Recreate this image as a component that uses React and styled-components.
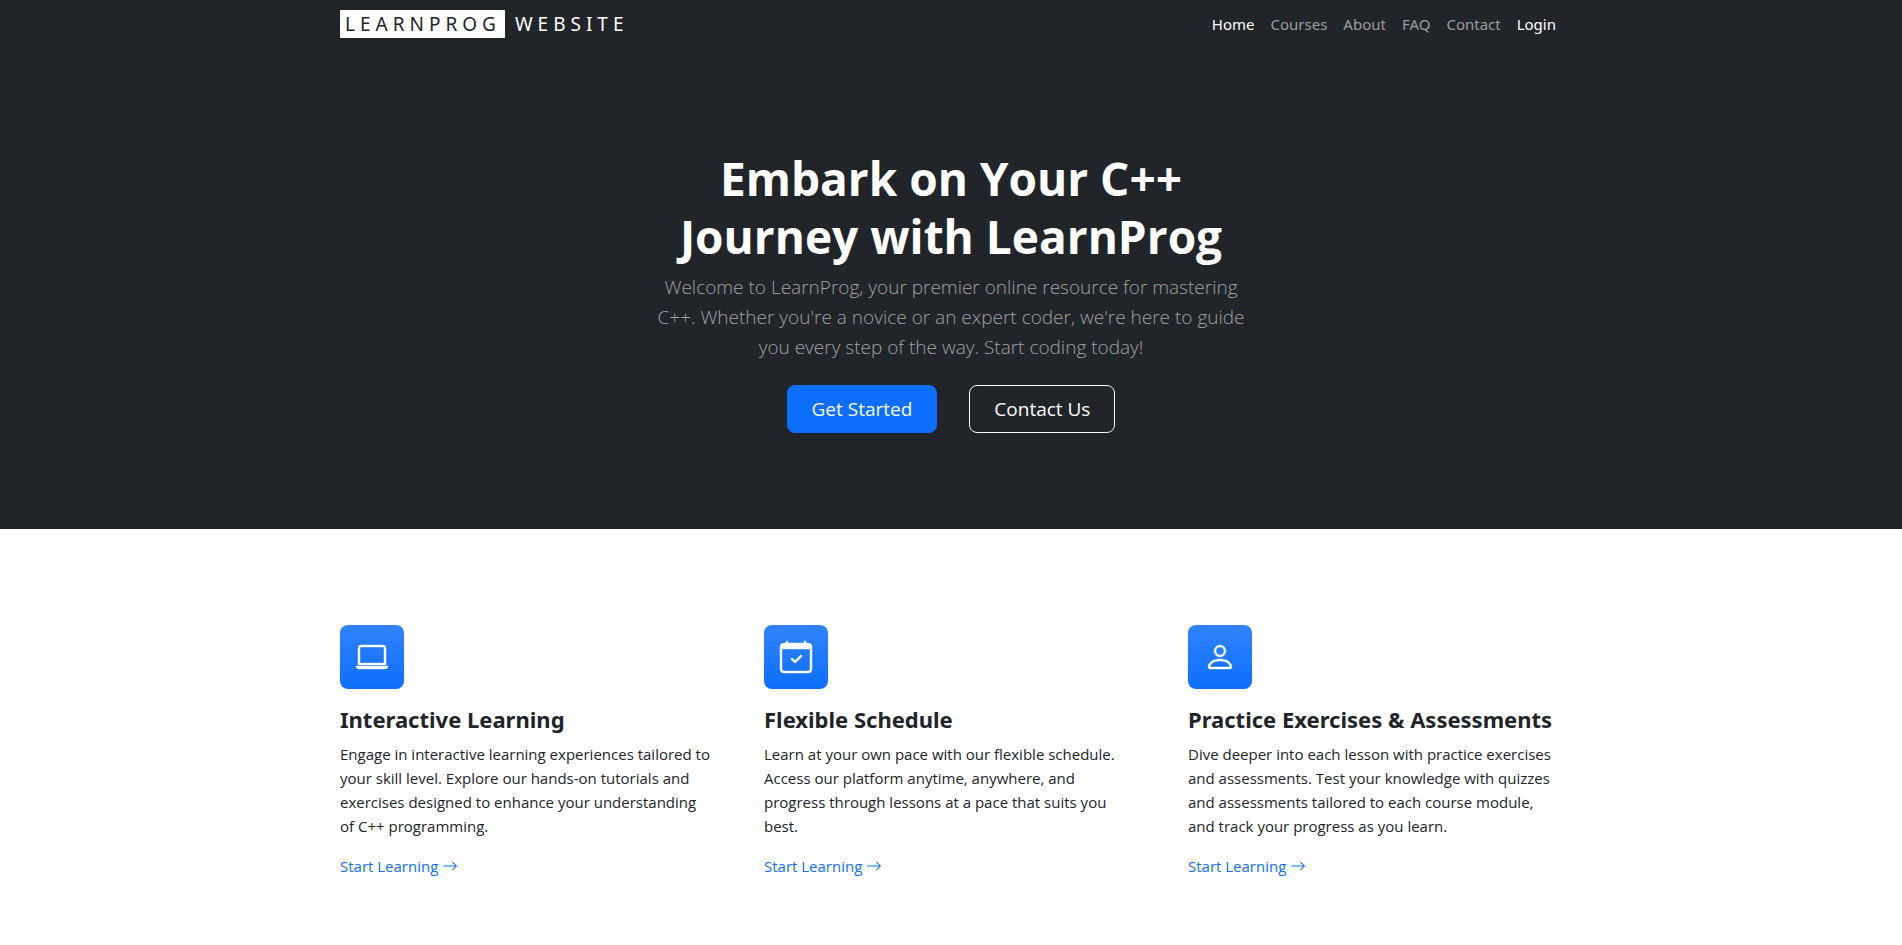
import React from "react";
import styled, { createGlobalStyle } from "styled-components";
import { BsLaptop, BsPerson, BsArrowRight } from "react-icons/bs";

const Global = createGlobalStyle`
  *, *::before, *::after { box-sizing: border-box; }
  body {
    margin: 0;
    background: #fff;
    color: #212529;
    font-family: "Segoe UI", "Open Sans", "Noto Sans", sans-serif;
    font-size: 16px;
    line-height: 24px;
  }
  a { text-decoration: none; }
`;

const Container = styled.div`
  width: 100%;
  max-width: 1248px;
  margin: 0 auto;
  padding: 0 11px 0 13px;
`;

const Dark = styled.div`
  background: #212529;
`;

const Bar = styled(Container)`
  display: flex;
  align-items: center;
  justify-content: space-between;
  min-height: 48px;
`;

const Brand = styled.a`
  display: flex;
  align-items: center;
  gap: 10px;
  color: #fff;
  font-family: "Noto Sans", sans-serif;
  font-size: 19px;
  letter-spacing: 5px;
`;

const BrandMark = styled.span`
  padding: 0 4px 0 5px;
  line-height: 28px;
  background: #fff;
  color: #212529;
`;

const Links = styled.nav`
  display: flex;
`;

const NavLink = styled.a`
  padding: 8px;
  font-family: "Noto Sans", sans-serif;
  font-size: 15px;
  color: ${(p) => (p.$active ? "#fff" : "#9b9d9f")};
`;

const Hero = styled.header`
  display: flex;
  flex-direction: column;
  align-items: center;
  max-width: 624px;
  margin: 0 auto;
  padding: 101px 12px 96px;
  text-align: center;
`;

const Title = styled.h1`
  margin: 0 0 7px;
  color: #fff;
  font-size: 46px;
  line-height: 58px;
  font-weight: 700;
`;

const Lead = styled.p`
  margin: 0 0 23px;
  color: #a0a2a4;
  font-size: 19px;
  line-height: 30px;
  font-weight: 300;
`;

const Actions = styled.div`
  display: flex;
  gap: 32px;
`;

const Button = styled.button`
  height: 48px;
  padding: 0 24px;
  border: 1px solid ${(p) => (p.$outline ? "#f8f9fa" : "#0d6efd")};
  border-radius: 8px;
  background: ${(p) => (p.$outline ? "transparent" : "#0d6efd")};
  color: #fff;
  font-family: inherit;
  font-size: 19px;
`;

const Features = styled(Container).attrs({ as: "main" })`
  display: grid;
  grid-template-columns: repeat(3, minmax(0, 1fr));
  gap: 48px;
  padding-top: 96px;
  padding-bottom: 96px;
`;

const Feature = styled.section`
  display: flex;
  flex-direction: column;
  align-items: flex-start;
`;

const FeatureIcon = styled.div`
  display: flex;
  align-items: center;
  justify-content: center;
  width: 64px;
  height: 64px;
  margin-bottom: 16px;
  border-radius: 8px;
  background: #0d6efd linear-gradient(180deg, rgba(255, 255, 255, 0.15), rgba(255, 255, 255, 0));
  color: #fff;
  font-size: 32px;

  svg {
    overflow: visible;
    stroke: currentColor;
    stroke-width: 0.2;
  }
`;

const FeatureTitle = styled.h2`
  margin: 0 0 8px;
  font-family: "Noto Sans", sans-serif;
  font-size: 22px;
  line-height: 29px;
  font-weight: 700;
  white-space: nowrap;
`;

const FeatureText = styled.p`
  margin: 0 0 16px;
  font-size: 15px;
`;

const More = styled.a`
  display: flex;
  align-items: center;
  gap: 4px;
  color: #0d6efd;
  font-size: 15px;
`;

const CalendarCheck = () => (
  <svg width="1em" height="1em" viewBox="0 0 16 16" fill="currentColor" aria-hidden="true">
    <path d="M10.854 7.146a.5.5 0 0 1 0 .708l-3 3a.5.5 0 0 1-.708 0l-1.5-1.5a.5.5 0 0 1 .708-.708L7.5 9.793l2.646-2.647a.5.5 0 0 1 .708 0z" />
    <path d="M3.5 0a.5.5 0 0 1 .5.5V1h8V.5a.5.5 0 0 1 1 0V1h1a2 2 0 0 1 2 2v11a2 2 0 0 1-2 2H2a2 2 0 0 1-2-2V3a2 2 0 0 1 2-2h1V.5a.5.5 0 0 1 .5-.5zM1 4v10a1 1 0 0 0 1 1h12a1 1 0 0 0 1-1V4H1z" />
  </svg>
);

const nav = [
  ["Home", true], ["Courses", false], ["About", false],
  ["FAQ", false], ["Contact", false], ["Login", true],
];

const features = [
  {
    Icon: BsLaptop,
    title: "Interactive Learning",
    lines: ["Engage in interactive learning experiences tailored to", "your skill level. Explore our hands-on tutorials and", "exercises designed to enhance your understanding", "of C++ programming."],
  },
  {
    Icon: CalendarCheck,
    title: "Flexible Schedule",
    lines: ["Learn at your own pace with our flexible schedule.", "Access our platform anytime, anywhere, and", "progress through lessons at a pace that suits you", "best."],
  },
  {
    Icon: BsPerson,
    title: "Practice Exercises & Assessments",
    lines: ["Dive deeper into each lesson with practice exercises", "and assessments. Test your knowledge with quizzes", "and assessments tailored to each course module,", "and track your progress as you learn."],
  },
];

const Lines = ({ of }) => of.map((line, i) => (
  <React.Fragment key={line}>{i > 0 && <br />}{line}</React.Fragment>
));

export default function App() {
  return (
    <>
      <Global />
      <Dark>
        <Bar>
          <Brand href="#"><BrandMark>LEARNPROG</BrandMark>WEBSITE</Brand>
          <Links>
            {nav.map(([label, active]) => (
              <NavLink key={label} href="#" $active={active}>{label}</NavLink>
            ))}
          </Links>
        </Bar>
        <Hero>
          <Title><Lines of={["Embark on Your C++", "Journey with LearnProg"]} /></Title>
          <Lead>
            <Lines of={["Welcome to LearnProg, your premier online resource for mastering", "C++. Whether you're a novice or an expert coder, we're here to guide", "you every step of the way. Start coding today!"]} />
          </Lead>
          <Actions>
            <Button type="button">Get Started</Button>
            <Button type="button" $outline>Contact Us</Button>
          </Actions>
        </Hero>
      </Dark>
      <Features>
        {features.map(({ Icon, title, lines }) => (
          <Feature key={title}>
            <FeatureIcon><Icon /></FeatureIcon>
            <FeatureTitle>{title}</FeatureTitle>
            <FeatureText><Lines of={lines} /></FeatureText>
            <More href="#">Start Learning <BsArrowRight size={16} /></More>
          </Feature>
        ))}
      </Features>
    </>
  );
}
